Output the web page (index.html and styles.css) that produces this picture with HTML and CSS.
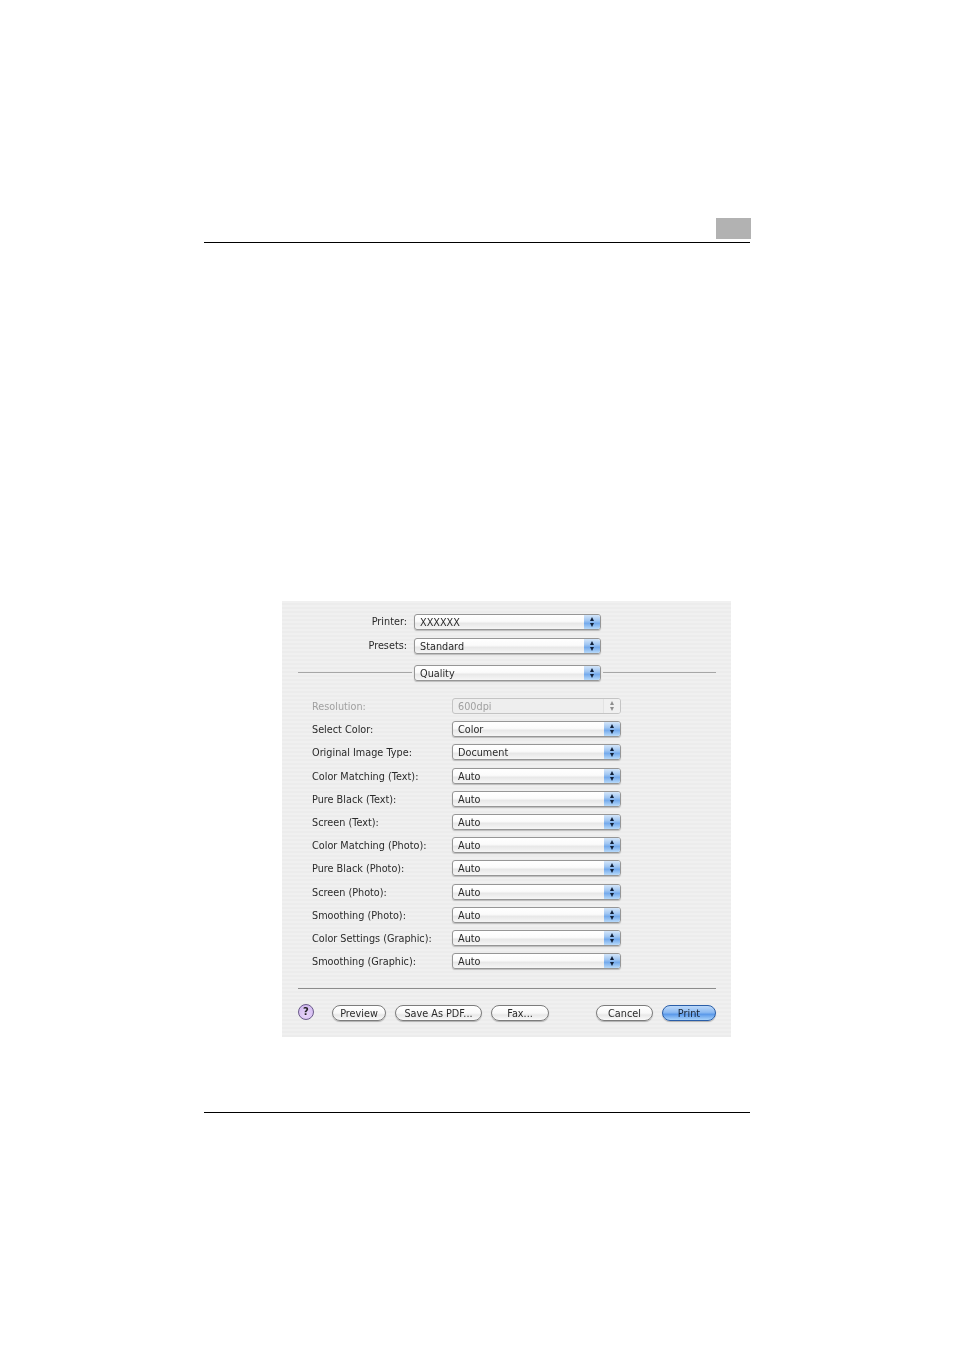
FILE: index.html
```html
<html>
	<head>
		<title>Print - Quality</title>
		<link rel="stylesheet" href="styles.css">
	</head>
	<body>
		<div class="page-head">
			<div class="chapter-box"></div>
		</div>

		<div class="dialog">
			<div class="top-row">
				<span class="top-label">Printer:</span>
				<div class="popup popup-wide"><span class="popup-text">XXXXXX</span><span class="arrows"></span></div>
			</div>
			<div class="top-row presets-row">
				<span class="top-label">Presets:</span>
				<div class="popup popup-wide"><span class="popup-text">Standard</span><span class="arrows"></span></div>
			</div>
			<div class="pane-row">
				<div class="rule rule-left"></div>
				<div class="popup popup-wide"><span class="popup-text">Quality</span><span class="arrows"></span></div>
				<div class="rule rule-right"></div>
			</div>

			<div class="options">
				<span class="opt-label disabled">Resolution:</span>
				<div class="popup popup-off"><span class="popup-text">600dpi</span><span class="arrows"></span></div>
				<span class="opt-label">Select Color:</span>
				<div class="popup"><span class="popup-text">Color</span><span class="arrows"></span></div>
				<span class="opt-label">Original Image Type:</span>
				<div class="popup"><span class="popup-text">Document</span><span class="arrows"></span></div>
				<span class="opt-label">Color Matching (Text):</span>
				<div class="popup"><span class="popup-text">Auto</span><span class="arrows"></span></div>
				<span class="opt-label">Pure Black (Text):</span>
				<div class="popup"><span class="popup-text">Auto</span><span class="arrows"></span></div>
				<span class="opt-label">Screen (Text):</span>
				<div class="popup"><span class="popup-text">Auto</span><span class="arrows"></span></div>
				<span class="opt-label">Color Matching (Photo):</span>
				<div class="popup"><span class="popup-text">Auto</span><span class="arrows"></span></div>
				<span class="opt-label">Pure Black (Photo):</span>
				<div class="popup"><span class="popup-text">Auto</span><span class="arrows"></span></div>
				<span class="opt-label">Screen (Photo):</span>
				<div class="popup"><span class="popup-text">Auto</span><span class="arrows"></span></div>
				<span class="opt-label">Smoothing (Photo):</span>
				<div class="popup"><span class="popup-text">Auto</span><span class="arrows"></span></div>
				<span class="opt-label">Color Settings (Graphic):</span>
				<div class="popup"><span class="popup-text">Auto</span><span class="arrows"></span></div>
				<span class="opt-label">Smoothing (Graphic):</span>
				<div class="popup"><span class="popup-text">Auto</span><span class="arrows"></span></div>
			</div>

			<div class="rule sep"></div>

			<div class="buttons">
				<div class="help">?</div>
				<div class="btn btn-preview">Preview</div>
				<div class="btn btn-pdf">Save As PDF...</div>
				<div class="btn btn-fax">Fax...</div>
				<div class="btn btn-cancel">Cancel</div>
				<div class="btn btn-print">Print</div>
			</div>
		</div>

		<div class="page-foot"></div>
	</body>
</html>
```

FILE: styles.css
```css
html, body {
	margin: 0;
	padding: 0;
	background: #ffffff;
}

body {
	width: 954px;
	height: 1350px;
	overflow: hidden;
	font-family: "DejaVu Sans", sans-serif;
	font-size: 9.7px;
	color: #2a2a2a;
}

.page-head {
	display: flex;
	justify-content: flex-end;
	align-items: flex-start;
	box-sizing: border-box;
	width: 546px;
	height: 25px;
	margin: 218px 0 0 204px;
	border-bottom: 1px solid #000000;
}

.chapter-box {
	width: 35px;
	height: 21px;
	margin-right: -1px;
	background: #b2b2b2;
}

.dialog {
	box-sizing: border-box;
	width: 449px;
	height: 436px;
	margin: 358px 0 0 282px;
	padding: 13px 15px 0 16px;
	background: repeating-linear-gradient(to bottom, #f0f0f0 0, #f0f0f0 2px, #ececec 2px, #ececec 4px);
	filter: blur(0.4px);
}

.top-row {
	display: flex;
	align-items: flex-start;
	gap: 7px;
}

.presets-row {
	margin-top: 8px;
}

.top-label {
	width: 109px;
	line-height: 16px;
	text-align: right;
	white-space: nowrap;
}

.pane-row {
	display: flex;
	align-items: flex-start;
	margin-top: 11px;
}

.rule {
	height: 1px;
	background: #a6a6a6;
}

.rule-left {
	flex: none;
	width: 114px;
	margin: 7px 2px 0 0;
}

.rule-right {
	flex: 1;
	margin: 7px 0 0 2px;
}

.options {
	display: grid;
	grid-template-columns: 140px 169px;
	grid-auto-rows: 16px;
	row-gap: 7.2px;
	align-items: center;
	margin: 17px 0 0 14px;
}

.opt-label {
	padding-top: 1px;
	white-space: nowrap;
}

.disabled {
	padding-top: 0;
	color: #a0a0a0;
}

/* popup menu */
.popup {
	display: flex;
	box-sizing: border-box;
	width: 169px;
	height: 16px;
	border: 1px solid #969696;
	border-radius: 3px;
	background: linear-gradient(to bottom, #ffffff 0, #fbfbfb 45%, #e8e8e8 60%, #f6f6f6 100%);
	box-shadow: 0 1px 1px #bcbcbc;
}

.popup-wide {
	flex: none;
	width: 187px;
}

.popup-text {
	flex: 1;
	padding-left: 5px;
	line-height: 15px;
	white-space: nowrap;
}

.arrows {
	position: relative;
	width: 16px;
	border-radius: 0 2px 2px 0;
	background: linear-gradient(to bottom, #d4e6fa 0, #a0c6f2 40%, #74aaec 60%, #b8dafa 100%);
}

.arrows::before,
.arrows::after {
	content: "";
	position: absolute;
	left: 5.5px;
	border-left: 2.5px solid transparent;
	border-right: 2.5px solid transparent;
}

.arrows::before {
	top: 2px;
	border-bottom: 4px solid #10203a;
}

.arrows::after {
	bottom: 2px;
	border-top: 4px solid #10203a;
}

.popup-off {
	border-color: #c4c4c4;
	background: #eeeeee;
	box-shadow: none;
	color: #a0a0a0;
}

.popup-off .arrows {
	background: #f0f0f0;
	border-left: 1px solid #e2e2e2;
}

.popup-off .arrows::before {
	border-bottom-color: #8e8e8e;
}

.popup-off .arrows::after {
	border-top-color: #8e8e8e;
}

.sep {
	margin-top: 19px;
	background: #8c8c8c;
}

/* bottom buttons */
.buttons {
	display: flex;
	align-items: flex-start;
	margin-top: 16px;
}

.help {
	box-sizing: border-box;
	width: 16px;
	height: 16px;
	margin: -1px 18px 0 0;
	border: 1px solid #6a5a8a;
	border-radius: 50%;
	background: radial-gradient(circle at 50% 70%, #e8d4fa 0, #cdb4ee 100%);
	font-weight: bold;
	font-size: 10px;
	line-height: 14px;
	text-align: center;
	color: #222222;
}

.btn {
	box-sizing: border-box;
	height: 16px;
	border: 1px solid #7c7c7c;
	border-radius: 8px;
	background: linear-gradient(to bottom, #ffffff 0, #f8f8f8 50%, #e8e8e8 65%, #fafafa 100%);
	box-shadow: 0 1px 1px #b0b0b0;
	line-height: 15px;
	text-align: center;
	white-space: nowrap;
}

.btn-preview {
	width: 54px;
}

.btn-pdf {
	width: 87px;
	margin-left: 9px;
}

.btn-fax {
	width: 58px;
	margin-left: 9px;
}

.btn-cancel {
	width: 57px;
	margin-left: auto;
}

.btn-print {
	width: 54px;
	margin-left: 9px;
	border-color: #2a5ea8;
	background: linear-gradient(to bottom, #bcd9fa 0, #8cbaf2 45%, #5c9aea 60%, #a8d2fa 100%);
	color: #16202e;
}

.page-foot {
	width: 546px;
	height: 1px;
	margin: 75px 0 0 204px;
	background: #000000;
}
```
